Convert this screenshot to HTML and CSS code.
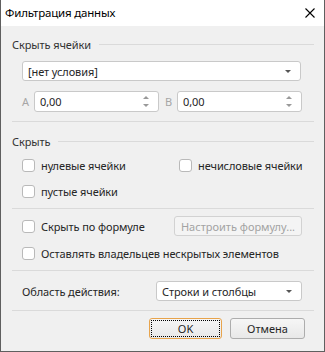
FILE: index.html
```html
<!DOCTYPE html>
<html lang="ru">
<head>
  <meta charset="UTF-8">
  <title>Фильтрация данных</title>
  <link rel="stylesheet" href="styles.css">
</head>
<body>
<div class="window">
  <div class="titlebar">
    <span class="title">Фильтрация данных</span>
    <svg class="close" width="10" height="10" viewBox="0 0 10 10">
      <path d="M0.5 0.5 L9.5 9.5 M9.5 0.5 L0.5 9.5" stroke="#000" stroke-width="1.1" fill="none"/>
    </svg>
  </div>

  <div class="content">
    <div class="group-head first"><span>Скрыть ячейки</span><i class="rule"></i></div>

    <div class="select cond">
      <span>[нет условия]</span>
      <i class="caret"></i>
    </div>

    <div class="range">
      <span class="range-label">A</span>
      <div class="spin"><span>0,00</span><i class="arrows"></i></div>
      <span class="range-label b">B</span>
      <div class="spin"><span>0,00</span><i class="arrows"></i></div>
    </div>

    <div class="sep s1"></div>

    <div class="group-head second"><span>Скрыть</span><i class="rule"></i></div>

    <div class="checks">
      <label class="check"><i class="box"></i>нулевые ячейки</label>
      <label class="check"><i class="box"></i>нечисловые ячейки</label>
      <label class="check"><i class="box"></i>пустые ячейки</label>
    </div>

    <div class="sep s2"></div>

    <div class="formula-row">
      <label class="check"><i class="box"></i>Скрыть по формуле</label>
      <button class="btn disabled">Настроить формулу...</button>
    </div>
    <label class="check owners"><i class="box"></i>Оставлять владельцев нескрытых элементов</label>

    <div class="sep s3"></div>

    <div class="area-row">
      <span class="area-label">Область действия:</span>
      <div class="select area">
        <span>Строки и столбцы</span>
        <i class="caret"></i>
      </div>
    </div>

    <div class="sep s4"></div>

    <div class="actions">
      <button class="btn ok">OK</button>
      <button class="btn cancel">Отмена</button>
    </div>
  </div>
</div>
</body>
</html>
```

FILE: styles.css
```css
body {
  margin: 0;
  font-family: "Noto Sans", "Open Sans", sans-serif;
  font-size: 11px;
  letter-spacing: -0.1px;
  color: #262626;
}
.window {
  box-sizing: border-box;
  width: 325px;
  height: 352px;
  background: #f0f0f0;
  border: 1px solid #5f5f5f;
  border-top: none;
}
.titlebar {
  height: 26px;
  background: #fff;
  display: flex;
  align-items: center;
  justify-content: space-between;
  padding: 0 9px 0 4px;
}
.title {
  font-size: 11.5px;
  letter-spacing: -0.2px;
  color: #000;
  margin-top: -1px;
}
.close {
  display: block;
  margin-top: -1px;
}

.content {
  display: flex;
  flex-direction: column;
  padding: 0 10px 0 11px;
}
.group-head {
  display: flex;
  align-items: center;
  height: 16px;
  color: #333;
}
.group-head.first {
  margin-top: 10px;
}
.group-head.second {
  margin-top: 11px;
}
.rule {
  flex: 1;
  height: 1px;
  background: #dadada;
  margin-left: 8px;
}

.select, .spin {
  box-sizing: border-box;
  height: 20px;
  background: #fff;
  border: 1px solid #c9c9c9;
  border-radius: 3px;
  display: flex;
  align-items: center;
  justify-content: space-between;
  padding: 0 9px 0 5px;
  position: relative;
}
.select.cond {
  margin: 9px 13px 0 10px;
}
.caret {
  width: 0;
  height: 0;
  border-left: 3px solid transparent;
  border-right: 3px solid transparent;
  border-top: 3px solid #555;
}

.range {
  display: grid;
  grid-template-columns: 12px 125px 18px 125px;
  align-items: center;
  height: 21px;
  margin: 10px 0 0 10px;
}
.range .spin {
  height: 21px;
  padding-left: 5px;
}
.range-label {
  color: #a6a6a6;
}
.range-label.b {
  padding-left: 6px;
}
.arrows {
  position: relative;
  width: 6px;
  height: 11px;
}
.arrows::before, .arrows::after {
  content: "";
  position: absolute;
  left: 0;
  border-left: 3px solid transparent;
  border-right: 3px solid transparent;
}
.arrows::before {
  top: 0;
  border-bottom: 3px solid #999;
}
.arrows::after {
  bottom: 0;
  border-top: 3px solid #999;
}

.sep {
  height: 1px;
  background: #dadada;
}
.s1 { margin-top: 9px; }
.s2 { margin-top: 7px; }
.s3 { margin-top: 7px; }
.s4 { margin-top: 9px; }

.checks {
  display: grid;
  grid-template-columns: 157px 1fr;
  row-gap: 6px;
  margin: 6px 0 0 10px;
}
.check {
  display: flex;
  align-items: center;
  height: 20px;
}
.box {
  box-sizing: border-box;
  width: 13px;
  height: 13px;
  background: #fff;
  border: 1px solid #b9b9b9;
  border-radius: 3px;
  margin-right: 6px;
}

.formula-row {
  display: flex;
  justify-content: space-between;
  align-items: center;
  margin: 7px 12px 0 10px;
}
.owners {
  margin: 7px 0 0 10px;
}

.btn {
  box-sizing: border-box;
  height: 21px;
  font: inherit;
  color: #262626;
  border: 1px solid #adadad;
  border-radius: 3px;
  background: linear-gradient(#f6f6f6, #e8e8e8);
  padding: 0;
}
.btn.disabled {
  width: 128px;
  height: 20px;
  color: #a3a3a3;
  border-color: #d2d2d2;
  background: #f4f4f4;
}

.area-row {
  display: flex;
  align-items: center;
  margin: 10px 12px 0 10px;
}
.area-label {
  width: 134px;
}
.select.area {
  flex: 1;
}

.actions {
  display: flex;
  justify-content: flex-end;
  gap: 8px;
  margin: 7px 9px 0 0;
}
.btn.ok {
  width: 73px;
  position: relative;
  border-color: #e8a44c;
}
.btn.ok::after {
  content: "";
  position: absolute;
  inset: 1px;
  border: 1px dotted #000;
}
.btn.cancel {
  width: 75px;
}
```
